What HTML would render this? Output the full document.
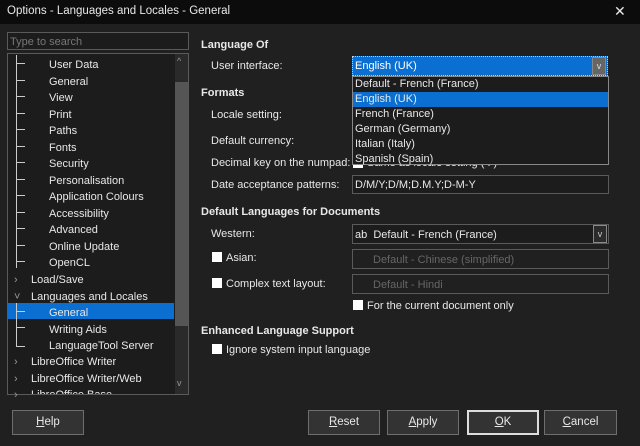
<!DOCTYPE html><html><head><style>
*{box-sizing:border-box;margin:0;padding:0}
body{width:640px;height:446px;background:#202020;font-family:"Liberation Sans",sans-serif;font-size:11px;color:#e8e8e8;position:relative;overflow:hidden}
.a{position:absolute;white-space:nowrap}
.title{left:0;top:0;width:640px;height:24px;background:#0c0c0c;padding:5px 0 0 7px;font-size:11.5px}
.box{border:1px solid #5a5a5a;background:#1c1c1c}
.b{font-weight:bold}
.btn{position:absolute;top:410px;height:25px;border:1px solid #6e6e6e;background:#333;text-align:center;line-height:23px;font-size:11.5px}
.cb{position:absolute;width:10px;height:10px;background:#fff}
.dd{position:absolute;width:14px;height:18px;border:1px solid #888;background:#2b2b2b}
</style></head><body>
<div class="a title">Options - Languages and Locales - General</div>
<div class="a" style="left:614px;top:3px;font-size:14px">✕</div>
<div class="a box" style="left:7px;top:32px;width:182px;height:18px;padding:3px 2px;color:#777">Type to search</div>
<div class="a box" style="left:7px;top:53px;width:182px;height:342px"></div>
<div class="a" style="left:175px;top:54px;width:13px;height:340px;background:#2a2a2a"></div>
<div class="a" style="left:175px;top:82px;width:13px;height:244px;background:#555"></div>
<div class="a" style="left:177px;top:56px;font-size:9px;color:#999">^</div>
<div class="a" style="left:177px;top:378px;font-size:9px;color:#999">v</div>
<div class="a" style="left:8px;top:303px;width:166px;height:16px;background:#0a6fd1"></div>
<div class="a" style="left:16px;top:55px;width:1px;height:213px;background:#ccc"></div>
<div class="a" style="left:16px;top:303px;width:1px;height:44px;background:#ccc"></div>
<div style="position:absolute;left:16px;top:0">
<div class="a" style="left:0;top:63px;width:9px;height:1px;background:#ccc"></div>
<div class="a" style="left:0;top:80px;width:9px;height:1px;background:#ccc"></div>
<div class="a" style="left:0;top:96px;width:9px;height:1px;background:#ccc"></div>
<div class="a" style="left:0;top:113px;width:9px;height:1px;background:#ccc"></div>
<div class="a" style="left:0;top:129px;width:9px;height:1px;background:#ccc"></div>
<div class="a" style="left:0;top:146px;width:9px;height:1px;background:#ccc"></div>
<div class="a" style="left:0;top:162px;width:9px;height:1px;background:#ccc"></div>
<div class="a" style="left:0;top:179px;width:9px;height:1px;background:#ccc"></div>
<div class="a" style="left:0;top:195px;width:9px;height:1px;background:#ccc"></div>
<div class="a" style="left:0;top:212px;width:9px;height:1px;background:#ccc"></div>
<div class="a" style="left:0;top:228px;width:9px;height:1px;background:#ccc"></div>
<div class="a" style="left:0;top:245px;width:9px;height:1px;background:#ccc"></div>
<div class="a" style="left:0;top:261px;width:9px;height:1px;background:#ccc"></div>
<div class="a" style="left:0;top:311px;width:9px;height:1px;background:#ccc"></div>
<div class="a" style="left:0;top:327px;width:9px;height:1px;background:#ccc"></div>
<div class="a" style="left:0;top:346px;width:9px;height:1px;background:#ccc"></div>
</div>
<div class="a" style="left:49px;top:57px;line-height:16.5px">User Data<br>General<br>View<br>Print<br>Paths<br>Fonts<br>Security<br>Personalisation<br>Application Colours<br>Accessibility<br>Advanced<br>Online Update<br>OpenCL</div>
<div class="a" style="left:14px;top:272px;line-height:16.5px;color:#999">›<br>˅</div>
<div class="a" style="left:14px;top:354px;line-height:16.5px;color:#999">›<br>›<br>›</div>
<div class="a" style="left:31px;top:272px;line-height:16.5px">Load/Save<br>Languages and Locales</div>
<div class="a" style="left:49px;top:305px;line-height:16.5px">General<br>Writing Aids<br>LanguageTool Server</div>
<div class="a" style="left:31px;top:354px;line-height:16.5px;height:40px;overflow:hidden">LibreOffice Writer<br>LibreOffice Writer/Web<br>LibreOffice Base</div>

<div class="a b" style="left:201px;top:39px">Language Of</div>
<div class="a" style="left:211px;top:60px">User interface:</div>
<div class="a b" style="left:201px;top:87px">Formats</div>
<div class="a" style="left:211px;top:109px">Locale setting:</div>
<div class="a" style="left:211px;top:135px">Default currency:</div>
<div class="a" style="left:211px;top:157px">Decimal key on the numpad:</div>
<div class="cb" style="left:353px;top:158px"></div>
<div class="a" style="left:367px;top:157px">Same as locale setting ( . )</div>
<div class="a" style="left:211px;top:179px">Date acceptance patterns:</div>
<div class="a box" style="left:352px;top:175px;width:257px;height:19px;padding:3px 2px">D/M/Y;D/M;D.M.Y;D-M-Y</div>
<div class="a b" style="left:201px;top:206px">Default Languages for Documents</div>
<div class="a" style="left:211px;top:228px">Western:</div>
<div class="a box" style="left:352px;top:224px;width:257px;height:20px;padding:4px 2px"><span style="font-size:11px">ab</span>&nbsp; Default - French (France)</div>
<div class="dd" style="left:593px;top:225px;color:#ccc;font-size:9px;text-align:center;line-height:16px">v</div>
<div class="cb" style="left:212px;top:252px"></div>
<div class="a" style="left:226px;top:252px">Asian:</div>
<div class="a box" style="left:352px;top:249px;width:257px;height:20px;padding:4px 20px;color:#666;background:#202020">Default - Chinese (simplified)</div>
<div class="cb" style="left:212px;top:278px"></div>
<div class="a" style="left:226px;top:278px">Complex text layout:</div>
<div class="a box" style="left:352px;top:274px;width:257px;height:20px;padding:4px 20px;color:#666;background:#202020">Default - Hindi</div>
<div class="cb" style="left:353px;top:300px"></div>
<div class="a" style="left:367px;top:300px">For the current document only</div>
<div class="a b" style="left:201px;top:325px">Enhanced Language Support</div>
<div class="cb" style="left:212px;top:344px"></div>
<div class="a" style="left:226px;top:344px">Ignore system input language</div>

<div class="a" style="left:352px;top:56px;width:256px;height:20px;background:#0a6fd1;border:1px dotted #ccc;padding:3px 2px;color:#fff">English (UK)</div>
<div class="dd" style="left:592px;top:57px;background:#666;color:#ddd;font-size:9px;text-align:center;line-height:16px">v</div>
<div class="a" style="left:352px;top:76px;width:257px;height:89px;background:#1c1c1c;border:1px solid #888;line-height:15px;padding-left:2px">Default - French (France)<br><span style="display:block;margin-left:-2px;padding-left:2px;background:#0a6fd1">English (UK)</span>French (France)<br>German (Germany)<br>Italian (Italy)<br>Spanish (Spain)</div>

<div class="btn" style="left:12px;width:72px"><u>H</u>elp</div>
<div class="btn" style="left:308px;width:72px"><u>R</u>eset</div>
<div class="btn" style="left:387px;width:72px"><u>A</u>pply</div>
<div class="btn" style="left:467px;width:72px;border:2px solid #ddd;line-height:21px"><u>O</u>K</div>
<div class="btn" style="left:544px;width:73px"><u>C</u>ancel</div>
</body></html>
